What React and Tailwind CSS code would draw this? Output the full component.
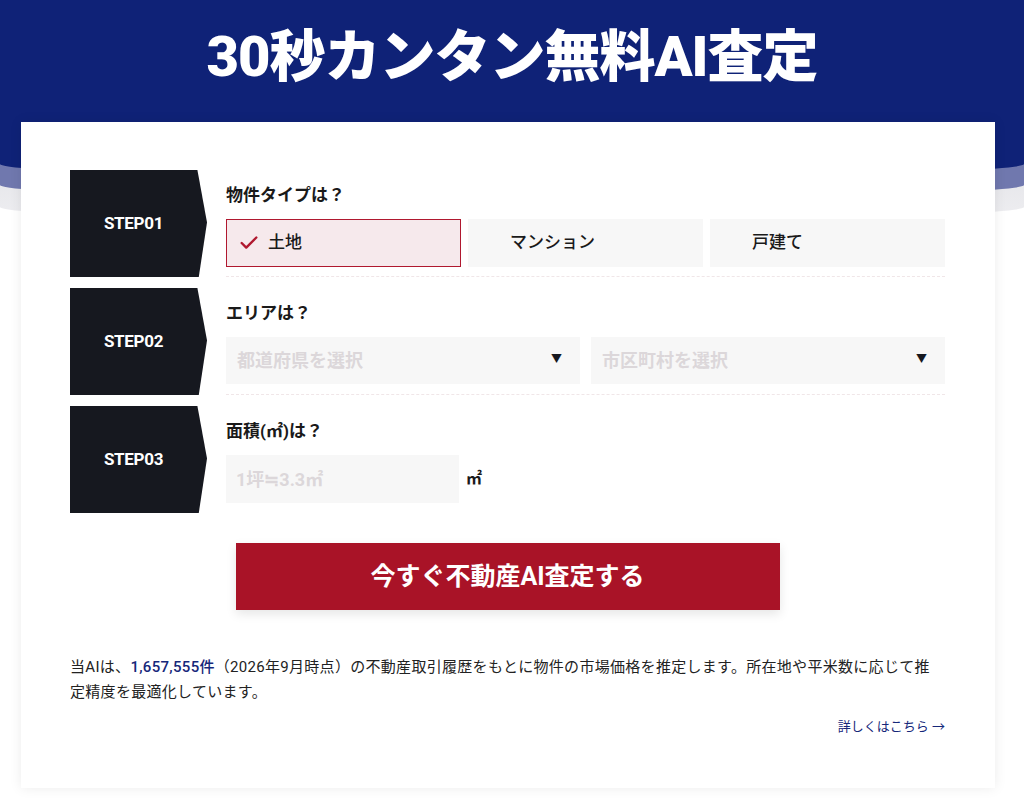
import React, { useState } from "react";
import { Check } from "lucide-react";

const FONT = { fontFamily: '"Roboto", "Noto Sans CJK JP", sans-serif' };

const TYPES = ["土地", "マンション", "戸建て"];

const StepBox = ({ label }) => (
  <div className="w-[137px] shrink-0 h-full bg-[#16181f] flex items-center justify-center pr-[10px] [clip-path:polygon(0_0,93%_0,100%_49%,94%_100%,0_100%)]">
    <span className="text-white font-bold text-[17px] tracking-[-0.3px]">{label}</span>
  </div>
);

const StepRow = ({ step, title, children, divider = true }) => (
  <div className="flex h-[107px]">
    <StepBox label={step} />
    <div
      className={`flex-1 ml-[19px] pt-[13px] ${
        divider ? "border-b border-dashed border-[#f0e6e8]" : ""
      }`}
    >
      <p className="text-[17px] leading-[24px] font-bold text-[#1a1a1a]">{title}</p>
      <div className="mt-[12px]">{children}</div>
    </div>
  </div>
);

const SelectBox = ({ placeholder }) => (
  <div className="flex-1 h-[47px] bg-[#f7f7f7] flex items-center justify-between pl-[11px] pr-[18px]">
    <span className="text-[18px] font-bold text-[#dcd7da]">{placeholder}</span>
    <span className="text-[11px] text-[#16181f]">▼</span>
  </div>
);

export default function App() {
  const [type, setType] = useState("土地");

  return (
    <div className="min-h-[801px] bg-white" style={FONT}>
      {/* header waves */}
      <div className="bg-gradient-to-b from-[#c9cad1] to-[#eeeef1] rounded-b-[50%_14px] pb-[22px]">
        <div className="bg-[#7078ae] rounded-b-[50%_14px] pb-[21px]">
          <div className="bg-[#0f2277] rounded-b-[50%_14px] h-[178px] pt-[27px]">
            <h1 className="text-center text-white font-black text-[56px] leading-[60px] tracking-[-1px]">
              30秒カンタン無料AI査定
            </h1>
          </div>
        </div>
      </div>

      {/* card */}
      <div className="relative ml-[21px] w-[974px] -mt-[99px] bg-white shadow-[0_0_12px_rgba(0,0,0,0.08)] pl-[49px] pr-[50px] pt-[48px] pb-[50px]">
        <div className="flex flex-col gap-[11px]">
          <StepRow step="STEP01" title="物件タイプは？">
            <div className="flex gap-[7px]">
              {TYPES.map((t) => {
                const active = t === type;
                return (
                  <button
                    key={t}
                    onClick={() => setType(t)}
                    className={`flex-1 h-[48px] flex items-center gap-[8px] pl-[11px] text-left border ${
                      active
                        ? "bg-[#f6e9ec] border-[#b0182f]"
                        : "bg-[#f7f7f7] border-[#f7f7f7]"
                    }`}
                  >
                    <Check
                      size={22}
                      strokeWidth={2.6}
                      className={active ? "text-[#b0182f]" : "invisible"}
                    />
                    <span className="text-[17px] text-[#1a1a1a] font-medium">{t}</span>
                  </button>
                );
              })}
            </div>
          </StepRow>

          <StepRow step="STEP02" title="エリアは？">
            <div className="flex gap-[11px]">
              <SelectBox placeholder="都道府県を選択" />
              <SelectBox placeholder="市区町村を選択" />
            </div>
          </StepRow>

          <StepRow step="STEP03" title="面積(㎡)は？" divider={false}>
            <div className="flex items-center gap-[7px]">
              <div className="w-[233px] h-[48px] bg-[#f7f7f7] flex items-center pl-[10px]">
                <span className="text-[18px] font-bold text-[#dcd7da]">1坪≒3.3㎡</span>
              </div>
              <span className="text-[16px] font-bold text-[#1a1a1a]">㎡</span>
            </div>
          </StepRow>
        </div>

        <div className="flex justify-center mt-[30px]">
          <button className="w-[544px] h-[67px] bg-[#a91327] text-white font-bold text-[25px] shadow-[0_4px_10px_rgba(0,0,0,0.1)]">
            今すぐ不動産AI査定する
          </button>
        </div>

        <p className="mt-[45px] text-[15px] leading-[25px] tracking-[0.3px] text-[#222]">
          当AIは、<span className="text-[#16287a] font-medium">1,657,555件</span>
          （2026年9月時点）の不動産取引履歴をもとに物件の市場価格を推定します。所在地や平米数に応じて推定精度を最適化しています。
        </p>

        <div className="mt-[9px] text-right">
          <a className="text-[13px] text-[#16287a]">詳しくはこちら →</a>
        </div>
      </div>
    </div>
  );
}
